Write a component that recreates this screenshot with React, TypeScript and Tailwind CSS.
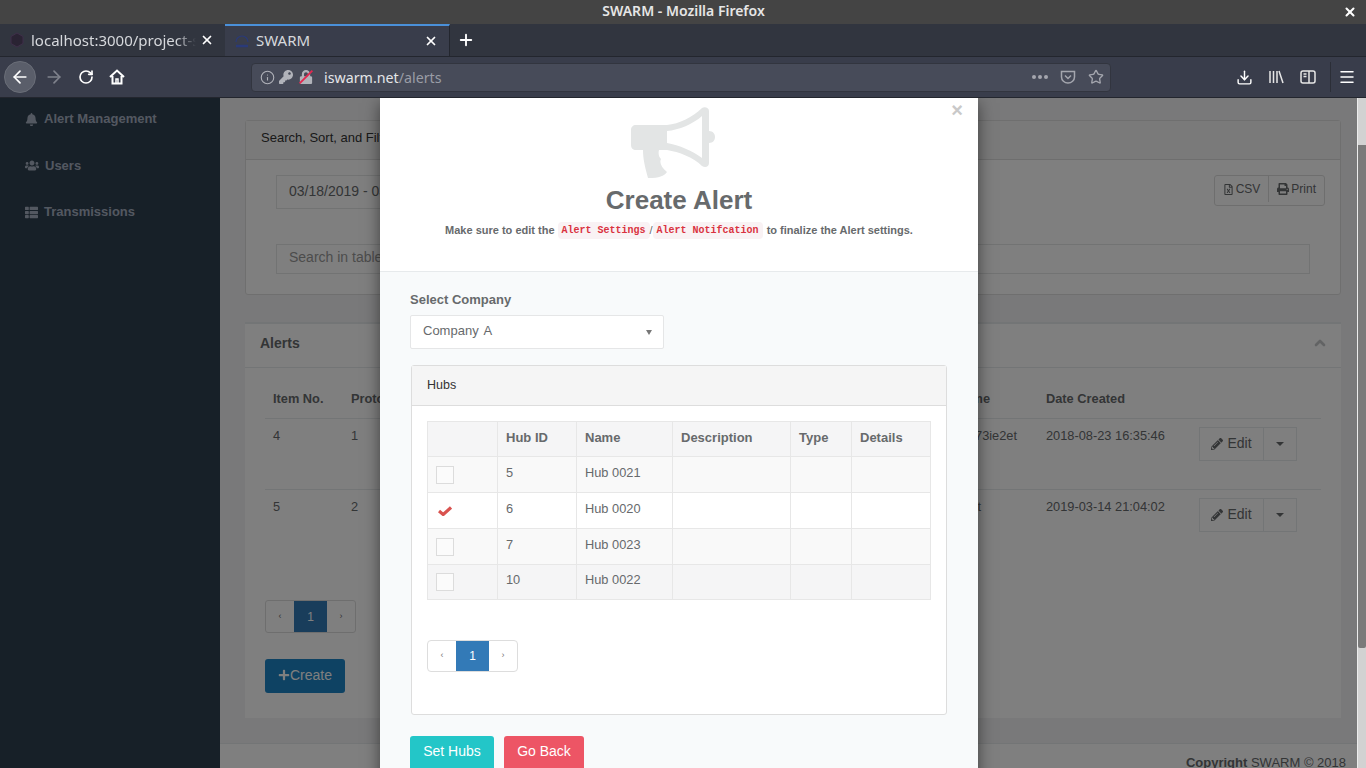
import { ArrowLeft, ArrowRight, ChevronUp, Download, Info, Menu, Plus, RotateCw, Star, X } from "lucide-react";
import { FaBell, FaKey, FaLock, FaPencilAlt, FaPlus, FaPrint, FaRegFileExcel, FaThList, FaUsers } from "react-icons/fa";

const hubs = [
  { id: 5, name: "Hub 0021", checked: false, height: "h-[36px]", rowBg: "bg-[#f9f9f9]" },
  { id: 6, name: "Hub 0020", checked: true, height: "h-[36px]", rowBg: "bg-white" },
  { id: 7, name: "Hub 0023", checked: false, height: "h-[36px]", rowBg: "bg-[#f9f9f9]" },
  { id: 10, name: "Hub 0022", checked: false, height: "h-[35px]", rowBg: "bg-[#f5f5f6]" },
];

function Megaphone() {
  return (
    <svg viewBox="0 0 84 72" className="mr-[12px] h-[72px] w-[84px] fill-[#e3e5e5]">
      <path
        fillRule="evenodd"
        d="M5 18 H36 C48 17 62 10 71 1 C73 -0.5 78 0 78 4 V24 C82 24 84 27 84 30 C84 33 82 36 78 36 V56 C78 60 74 61 71 59 C62 50 48 45 36 43 H28 C27 47 28 50 30 52 C28 56 31 61 36 65 C33 69 28 71 18 71 H17 C14 60 12 52 12 43 H5 C2 43 0 41 0 38 V23 C0 20 2 18 5 18 Z M36 24 V36 C48 38 62 44 71 51 V9 C62 17 48 23 36 24 Z"
      />
    </svg>
  );
}

function BrowserChrome() {
  return (
    <div className="shrink-0 font-['Noto_Sans',sans-serif]">
      <div className="flex h-6 items-center bg-[#444444] pl-[24px] pr-[9px]">
        <div className="flex-1 pb-[3px] text-center text-[14px] font-semibold text-[#e6e6e6]">SWARM - Mozilla Firefox</div>
        <X className="h-[14px] w-[14px] text-white" strokeWidth={3.5} />
      </div>
      <div className="flex h-[33px] items-stretch border-b border-[#23262e] bg-[#31353f] text-[15px]">
        <div className="flex w-[225px] items-center pl-[9px] pr-[11px] text-[#d6d8dc]">
          <svg viewBox="0 0 16 16" className="h-4 w-4 shrink-0">
            <path d="M8 1 L14 4.5 V11.5 L8 15 L2 11.5 V4.5 Z" fill="#2a2333" stroke="#3f2f4a" />
          </svg>
          <span className="ml-[6px] w-[165px] overflow-hidden whitespace-nowrap [mask-image:linear-gradient(to_right,black_88%,transparent)]">localhost:3000/project-swarm</span>
          <X className="ml-auto h-[14px] w-[14px] text-white" strokeWidth={3} />
        </div>
        <div className="flex w-[225px] items-center border-r border-t-2 border-[#23262e] border-t-[#4a90d9] bg-[#393d4b] pl-[9px] pr-[11px] text-[#d6d8dc]">
          <svg viewBox="0 0 16 16" className="h-4 w-4 shrink-0 fill-none stroke-[#2a3a78]">
            <path d="M2 9 A6 6 0 0 1 14 9" strokeWidth="1.2" />
            <path d="M2 13 H14" strokeWidth="2.5" />
          </svg>
          <span className="ml-[6px] pb-[2px]">SWARM</span>
          <X className="ml-auto h-[14px] w-[14px] text-white" strokeWidth={3} />
        </div>
        <div className="flex w-8 items-center justify-center">
          <Plus className="h-[18px] w-[18px] text-white" strokeWidth={2.5} />
        </div>
      </div>
      <div className="flex h-[41px] items-center border-b border-[#23262e] bg-[#393d4b] pl-1 pr-[11px]">
        <div className="flex h-8 w-8 shrink-0 items-center justify-center rounded-full border border-[#6a6e78] bg-[#5a5e6a]">
          <ArrowLeft className="h-[20px] w-[20px] text-white" strokeWidth={2} />
        </div>
        <ArrowRight className="ml-[8px] h-[20px] w-[20px] shrink-0 text-[#7f828c]" strokeWidth={2} />
        <RotateCw className="ml-[14px] h-4 w-4 shrink-0 text-white" strokeWidth={2.5} />
        <svg viewBox="0 0 16 16" className="ml-[15px] h-4 w-4 shrink-0 fill-none stroke-white" strokeWidth="2">
          <path d="M1 8 L8 1.5 L15 8 M3.5 7 V14.5 H12.5 V7" />
          <path d="M7 14 V10 H9 V14" strokeWidth="1.5" />
        </svg>
        <div className="ml-[126px] flex h-[29px] w-[860px] shrink-0 items-center rounded border border-[#32353f] bg-[#474b59] pl-[8px] pr-[6px] text-[14.25px]">
          <Info className="h-[15px] w-[15px] text-[#b1b3ba]" strokeWidth={1.75} />
          <FaKey className="ml-[4px] h-[14px] w-[14px] text-[#b1b3ba]" />
          <div className="relative ml-[6px]">
            <FaLock className="h-[14px] w-[14px] text-[#b1b3ba]" />
            <div className="absolute left-[-2px] top-[6px] h-[2px] w-[18px] -rotate-45 bg-[#e22850]" />
          </div>
          <span className="ml-[11px] pt-px text-[#e4e5e8]">iswarm.net</span>
          <span className="pt-px text-[#9a9da6]">/alerts</span>
          <div className="ml-auto flex items-center gap-[8px] text-[#a4a6ae]">
            <span className="flex gap-[2px]">
              <i className="h-[4px] w-[4px] rounded-full bg-[#a4a6ae]" />
              <i className="h-[4px] w-[4px] rounded-full bg-[#a4a6ae]" />
              <i className="h-[4px] w-[4px] rounded-full bg-[#a4a6ae]" />
            </span>
            <svg viewBox="0 0 16 16" className="ml-[4px] h-4 w-4 fill-none stroke-[#a4a6ae]" strokeWidth="1.5">
              <path d="M1.5 2.5 H14.5 V8 A6.5 6 0 0 1 1.5 8 Z" />
              <path d="M5 6.5 L8 9.5 L11 6.5" />
            </svg>
            <Star className="ml-[4px] h-4 w-4" strokeWidth={2} />
          </div>
        </div>
        <Download className="ml-[125px] h-[17px] w-[17px] shrink-0 text-white" strokeWidth={2} />
        <svg viewBox="0 0 16 16" className="ml-[15px] h-4 w-4 shrink-0 fill-none stroke-[#e6e6e6]" strokeWidth="1.5">
          <path d="M2 2 V14 M5.5 2 V14 M9 2 V14 M11 2 L15 14" />
        </svg>
        <svg viewBox="0 0 16 16" className="ml-[16px] h-4 w-4 shrink-0 fill-none stroke-[#e6e6e6]" strokeWidth="1.5">
          <rect x="1" y="2" width="14" height="12" rx="2" />
          <path d="M9 2 V14 M3.5 5 H6.5 M3.5 7.5 H6.5" />
        </svg>
        <div className="ml-[14px] h-[30px] w-px shrink-0 bg-[#2b2e37]" />
        <Menu className="ml-[7px] h-[18px] w-[18px] shrink-0 text-white" strokeWidth={2} />
      </div>
    </div>
  );
}

function NavItem({ icon, label }: { icon: React.ReactNode; label: string }) {
  return (
    <div className="flex h-[20px] items-center pl-[25px] text-[13px] font-bold text-[#a7b1c2]">
      {icon}
      {label}
    </div>
  );
}

function EditButton() {
  return (
    <div className="mt-[1px] flex h-[34px] text-[14px]">
      <div className="flex w-[65px] items-center justify-center gap-[4px] border border-[#e7eaec]">
        <FaPencilAlt className="h-[12px] w-[12px]" />
        Edit
      </div>
      <div className="flex w-[33px] items-center justify-center border border-l-0 border-[#e7eaec]">
        <span className="h-0 w-0 border-x-4 border-t-4 border-x-transparent border-t-[#676a6c]" />
      </div>
    </div>
  );
}

function BackgroundPage() {
  return (
    <div className="flex h-full font-['Liberation_Sans',sans-serif]">
      <aside className="flex w-[220px] shrink-0 flex-col gap-[26.5px] bg-[#2f4050] pt-[11px]">
        <NavItem icon={<FaBell className="mr-[6px] h-[13px] w-[13px]" />} label="Alert Management" />
        <NavItem icon={<FaUsers className="mr-[6px] h-[15px] w-[14px]" />} label="Users" />
        <NavItem icon={<FaThList className="mr-[6px] h-[13px] w-[13px]" />} label="Transmissions" />
      </aside>
      <main className="flex min-w-0 flex-1 flex-col bg-[#f3f3f4] text-[#676a6c]">
        <div className="pl-[25px] pr-[16px] pt-[22px]">
          <section className="h-[175px] rounded-[3px] border border-[#dfdfdf] bg-white">
            <div className="flex h-[39px] items-center border-b border-[#ddd] bg-[#f5f5f5] px-[15px] pb-[4px] text-[13px] text-[#333]">Search, Sort, and Filter</div>
            <div className="flex items-start justify-between pl-[30px] pr-[15px] pt-[15px]">
              <div className="flex h-[34px] w-[400px] items-center border border-[#e5e6e7] px-3 pb-[2px] text-[14px]">03/18/2019 - 03/18/2019</div>
              <div className="flex h-[31px] rounded-[3px] border border-[#ddd] pb-[3px] text-[12px]">
                <div className="flex items-center gap-[2px] border-r border-[#ddd] px-2">
                  <FaRegFileExcel className="h-[11px] w-[11px]" />
                  CSV
                </div>
                <div className="flex items-center gap-[2px] px-2">
                  <FaPrint className="h-[12px] w-[12px]" />
                  Print
                </div>
              </div>
            </div>
            <div className="px-[30px] pt-[35px]">
              <div className="flex h-[30px] items-center border border-[#e5e6e7] px-3 pb-[3px] text-[14px] text-[#999]">Search in table</div>
            </div>
          </section>
          <section className="mt-[27px] h-[396px] border-t-2 border-[#e7eaec] bg-white">
            <div className="flex h-[44px] items-center justify-between border-b border-[#e7eaec] px-[15px] pb-[5px] text-[14px] font-bold">
              Alerts
              <ChevronUp className="-mr-[2px] h-4 w-4 text-[#c4c6c8]" strokeWidth={4} />
            </div>
            <div className="px-[20px] pt-[20px]">
              <table className="w-full table-fixed border-collapse text-left text-[12.8px]">
                <thead>
                  <tr className="h-[30px] border-b border-[#e7eaec] align-top">
                    <th className="w-[78px] px-2 pt-[1px] font-bold">Item No.</th>
                    <th className="w-[100px] px-2 pt-[1px] font-bold">Protocol</th>
                    <th className="w-[555px] px-2 pt-[1px] text-right font-bold">Name</th>
                    <th className="w-[40px]" />
                    <th className="px-2 pt-[1px] font-bold">Date Created</th>
                  </tr>
                </thead>
                <tbody>
                  <tr className="h-[71px] border-b border-[#e7eaec] align-top">
                    <td className="px-2 pt-[7px]">4</td>
                    <td className="px-2 pt-[7px]">1</td>
                    <td className="pr-[21px] pt-[7px] text-right" colSpan={2}>f73ie2et</td>
                    <td className="pt-[7px]">
                      <div className="flex items-start pl-2">
                        <span className="w-[153px]">2018-08-23 16:35:46</span>
                        <EditButton />
                      </div>
                    </td>
                  </tr>
                  <tr className="h-[71px] align-top">
                    <td className="px-2 pt-[7px]">5</td>
                    <td className="px-2 pt-[7px]">2</td>
                    <td className="pr-[57px] pt-[7px] text-right" colSpan={2}>test</td>
                    <td className="pt-[7px]">
                      <div className="flex items-start pl-2">
                        <span className="w-[153px]">2019-03-14 21:04:02</span>
                        <EditButton />
                      </div>
                    </td>
                  </tr>
                </tbody>
              </table>
              <div className="mt-[40px] flex h-[33px] w-[91px] rounded-[3px] border border-[#ddd] text-[12px]">
                <span className="flex flex-1 items-center justify-center text-[9px]">‹</span>
                <span className="flex w-[33px] items-center justify-center bg-[#337ab7] text-white">1</span>
                <span className="flex flex-1 items-center justify-center text-[9px]">›</span>
              </div>
              <div className="mt-[26px] flex h-[34px] w-[80px] items-center justify-center rounded-[3px] bg-[#1c84c6] pb-[2px] text-[14px] text-white">
                <FaPlus className="h-[12px] w-[12px]" />
                Create
              </div>
            </div>
          </section>
        </div>
        <footer className="mt-[25px] flex-1 border-t border-[#e7eaec] bg-white pr-[11px] pt-[9px] text-right text-[13px]">
          <b>Copyright</b> SWARM © 2018
        </footer>
      </main>
    </div>
  );
}

function HubsTable() {
  return (
    <table className="w-[504px] table-fixed border-collapse text-left text-[12.8px] text-[#676a6c]">
      <thead>
        <tr className="h-[35px] bg-[#f5f5f6]">
          <th className="w-[70px] border border-[#e7e7e7]" />
          <th className="w-[79px] border border-[#e7e7e7] px-2 pb-[3px] text-[13px] font-bold">Hub ID</th>
          <th className="w-[96px] border border-[#e7e7e7] px-2 pb-[3px] text-[13px] font-bold">Name</th>
          <th className="w-[118px] border border-[#e7e7e7] px-2 pb-[3px] text-[13px] font-bold">Description</th>
          <th className="w-[61px] border border-[#e7e7e7] px-2 pb-[3px] text-[13px] font-bold">Type</th>
          <th className="border border-[#e7e7e7] px-2 pb-[3px] text-[13px] font-bold">Details</th>
        </tr>
      </thead>
      <tbody>
        {hubs.map((hub) => (
          <tr key={hub.id} className={`${hub.height} ${hub.rowBg}`}>
            <td className="border border-[#e7e7e7] pl-[8px]">
              {hub.checked ? (
                <svg viewBox="0 0 14 10" className="ml-[2px] h-[10px] w-[14px] fill-none stroke-[#d9534f]" strokeWidth="3.2">
                  <path d="M1 5 L5.2 8.5 L13 1.5" />
                </svg>
              ) : (
                <div className="h-[18px] w-[18px] border border-[#dcdcdc] bg-[#fbfbfb]" />
              )}
            </td>
            <td className="border border-[#e7e7e7] px-2 pb-[4px]">{hub.id}</td>
            <td className="border border-[#e7e7e7] px-2 pb-[4px]">{hub.name}</td>
            <td className="border border-[#e7e7e7]" />
            <td className="border border-[#e7e7e7]" />
            <td className="border border-[#e7e7e7]" />
          </tr>
        ))}
      </tbody>
    </table>
  );
}

function Modal() {
  return (
    <div className="absolute left-[380px] top-0 h-[760px] w-[598px] bg-[#f8fafb] font-['Liberation_Sans',sans-serif] text-[#676a6c] shadow-[0_5px_15px_rgba(0,0,0,0.5)]">
      <div className="relative flex h-[174px] flex-col items-center border-b border-[#e7eaec] bg-white pt-[9px]">
        <span className="absolute right-[15px] top-0 text-[20px] font-bold leading-6 text-[#c9c9c9]">×</span>
        <Megaphone />
        <h1 className="mt-[4px] text-[26px] font-bold leading-[34px]">Create Alert</h1>
        <p className="mt-[5px] flex items-center text-[11px] font-bold">
          Make sure to edit the
          <code className="ml-[3px] rounded-[4px] bg-[#f9f2f4] px-[4px] py-[1px] font-['Liberation_Mono',monospace] text-[10px] font-bold text-[#d9323f]">Alert Settings</code>
          <span className="font-normal">/</span>
          <code className="rounded-[4px] bg-[#f9f2f4] px-[4px] py-[1px] font-['Liberation_Mono',monospace] text-[10px] font-bold text-[#d9323f]">Alert Notifcation</code>
          <span className="ml-[4px]">to finalize the Alert settings.</span>
        </p>
      </div>
      <div className="px-[30px] pt-[20px]">
        <label className="block text-[13px] font-bold leading-4">Select Company</label>
        <div className="mt-[7px] flex h-[34px] w-[254px] items-center justify-between rounded-[2px] border border-[#e5e6e7] bg-white pb-[2px] pl-[12px] pr-[11px] text-[13px]">
          <span className="[word-spacing:2px]">Company A</span>
          <span className="mt-[3px] h-0 w-0 border-x-[3px] border-t-[5px] border-x-transparent border-t-[#777]" />
        </div>
        <div className="ml-px mt-[16px] h-[350px] w-[536px] rounded-[3px] border border-[#ddd] bg-white">
          <div className="flex h-[40px] items-center border-b border-[#ddd] bg-[#f5f5f5] px-[15px] text-[12.5px] text-[#333]">Hubs</div>
          <div className="px-[15px] pt-[15px]">
            <HubsTable />
            <div className="mt-[40px] flex h-[32px] w-[91px] rounded-[4px] border border-[#ddd] text-[12px]">
              <span className="flex flex-1 items-center justify-center text-[9px] text-[#777]">‹</span>
              <span className="flex w-[33px] items-center justify-center bg-[#337ab7] text-white">1</span>
              <span className="flex flex-1 items-center justify-center text-[9px] text-[#777]">›</span>
            </div>
          </div>
        </div>
        <div className="mt-[21px] flex gap-[10px] text-[14px] text-white">
          <div className="flex h-[34px] w-[84px] justify-center rounded-[3px] bg-[#23c6c8] pt-[5px]">Set Hubs</div>
          <div className="flex h-[34px] w-[80px] justify-center rounded-[3px] bg-[#ed5565] pt-[5px]">Go Back</div>
        </div>
      </div>
    </div>
  );
}

export default function App() {
  return (
    <div className="flex h-[768px] w-[1366px] flex-col overflow-hidden">
      <BrowserChrome />
      <div className="flex min-h-0 flex-1">
        <div className="relative min-w-0 flex-1 overflow-hidden">
          <BackgroundPage />
          <div className="absolute inset-0 bg-black/50" />
          <Modal />
        </div>
        <div className="flex w-[9px] shrink-0 flex-col border-l border-[#ececec] bg-[#d2d2d2]">
          <div className="mt-[47px] h-[503px] w-[8px] rounded-b-[2px] bg-[#7a7a7a]" />
        </div>
      </div>
    </div>
  );
}
